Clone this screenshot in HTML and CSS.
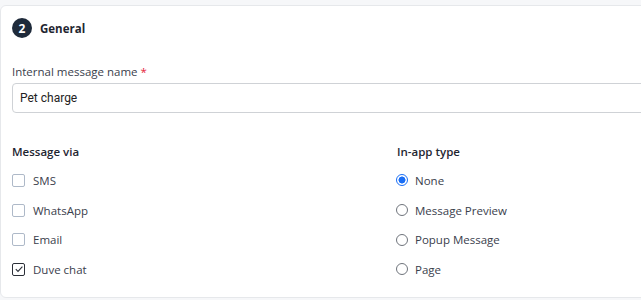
FILE: index.html
```html
<!DOCTYPE html>
<html lang="en">
<head>
  <meta charset="UTF-8" />
  <title>General - Message</title>
  <link rel="stylesheet" href="styles.css">
</head>
<body>

  <div class="card">
    <div class="step-head">
      <span class="step-num">2</span>
      <h3>General</h3>
    </div>

    <div class="form-group">
      <label for="msg-name">Internal message name <span class="req">*</span></label>
      <input type="text" id="msg-name" value="Pet charge">
    </div>

    <div class="cols">
      <div class="col">
        <h4>Message via</h4>
        <label class="opt"><span class="box"></span>SMS</label>
        <label class="opt"><span class="box"></span>WhatsApp</label>
        <label class="opt"><span class="box"></span>Email</label>
        <label class="opt"><span class="box checked">
          <svg width="10" height="10" viewBox="0 0 10 10"><path d="M1.8 5.2 L4 7.4 L8.4 2.6" fill="none" stroke="#2b2f38" stroke-width="1.1"/></svg>
        </span>Duve chat</label>
      </div>
      <div class="col">
        <h4>In-app type</h4>
        <label class="opt"><span class="radio on"></span>None</label>
        <label class="opt"><span class="radio"></span>Message Preview</label>
        <label class="opt"><span class="radio"></span>Popup Message</label>
        <label class="opt"><span class="radio"></span>Page</label>
      </div>
    </div>
  </div>

</body>
</html>
```

FILE: styles.css
```css
:root {
  --navy: #1e2a3a;
  --text: #3a404c;
  --border: #e6e8eb;
  --blue: #1a6ef5;
}
body {
  margin: 0;
  background: #f6f7f9;
  font-family: 'Open Sans', sans-serif;
  color: var(--text);
  overflow: hidden;
}
.card {
  margin-top: 5px;
  width: 800px;
  background: #fff;
  border: 1px solid var(--border);
  border-radius: 6px;
  padding: 12px 11px 13px;
}
.step-head {
  display: flex;
  align-items: center;
  gap: 8px;
  height: 20px;
  margin-bottom: 26px;
}
.step-num {
  width: 20px;
  height: 20px;
  border-radius: 50%;
  background: var(--navy);
  color: #fff;
  font-size: 12px;
  font-weight: 700;
  display: flex;
  align-items: center;
  justify-content: center;
}
.step-head h3 {
  margin: 0;
  font-size: 11.5px;
  font-weight: 700;
  color: #1f2631;
}
.form-group label {
  display: block;
  font-size: 11.5px;
  line-height: 16px;
  margin-bottom: 3px;
}
.req {
  color: #e5243b;
}
input {
  box-sizing: border-box;
  width: 100%;
  height: 30px;
  padding: 0 7px;
  font-family: Roboto, Arial, sans-serif;
  font-size: 12px;
  color: #222;
  border: 1px solid #cfd2d6;
  border-radius: 4px;
  outline: none;
}
.cols {
  display: grid;
  grid-template-columns: 385px 1fr;
  margin-top: 31px;
}
.col h4 {
  margin: 0 0 5.5px;
  font-size: 11.5px;
  line-height: 16px;
  font-weight: 600;
  color: #1f2631;
}
.opt {
  display: flex;
  align-items: center;
  height: 29.7px;
  font-size: 11.5px;
}
.box {
  box-sizing: border-box;
  width: 13px;
  height: 13px;
  border: 1px solid #aeb9c8;
  border-radius: 2px;
  margin-right: 8px;
  display: flex;
  align-items: center;
  justify-content: center;
}
.box.checked {
  border-color: #2b2f38;
}
.radio {
  box-sizing: border-box;
  width: 12px;
  height: 12px;
  border: 1px solid #6f747c;
  border-radius: 50%;
  margin: 0 7px 0 -1px;
}
.radio.on {
  border-color: var(--blue);
  background: radial-gradient(circle, var(--blue) 0 3.2px, #fff 3.8px);
}
```
